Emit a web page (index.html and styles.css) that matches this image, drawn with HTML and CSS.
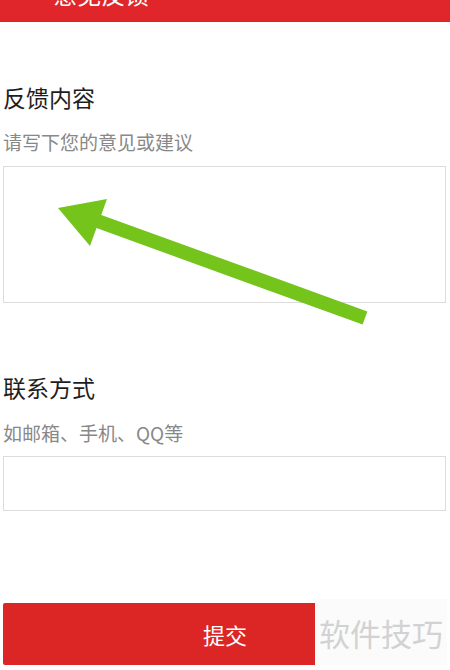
FILE: index.html
```html
<!DOCTYPE html>
<html lang="zh-CN">
<head>
    <meta charset="UTF-8">
    <meta name="viewport" content="width=device-width, initial-scale=1.0">
    <title>意见反馈</title>
    <link rel="stylesheet" href="styles.css">
</head>
<body>
    <div class="header">
        <span class="back">&lt;</span>
        <span class="header-title">意见反馈</span>
    </div>

    <div class="form">
        <div class="field">
            <div class="field-title">反馈内容</div>
            <div class="field-hint">请写下您的意见或建议</div>
            <textarea class="feedback-box"></textarea>
        </div>

        <div class="field contact">
            <div class="field-title">联系方式</div>
            <div class="field-hint">如邮箱、手机、QQ等</div>
            <input class="contact-box" type="text">
        </div>
    </div>

    <div class="footer">
        <button class="submit">提交</button>
        <div class="watermark">软件技巧</div>
    </div>

    <svg class="pointer" width="450" height="670" viewBox="0 0 450 670">
        <line x1="365" y1="318" x2="92" y2="219" stroke="#74c41c" stroke-width="14"/>
        <polygon points="58,208 107,199 90,246" fill="#74c41c"/>
    </svg>
</body>
</html>
```

FILE: styles.css
```css
* {
    margin: 0;
    padding: 0;
    box-sizing: border-box;
    font-family: 'Noto Sans CJK SC', 'Noto Sans', sans-serif;
}

body {
    background: #fff;
    width: 450px;
    height: 670px;
    overflow: hidden;
    position: relative;
}

.header {
    height: 22px;
    background: #e0262a;
    overflow: hidden;
    display: flex;
    align-items: flex-end;
    gap: 41px;
}

.back {
    color: #fff;
    font-size: 22px;
    line-height: 22px;
    margin-bottom: 18px;
}

.header-title {
    color: #fff;
    font-size: 24px;
    line-height: 22px;
    margin-bottom: 17px;
}

.form {
    padding: 0 4px 0 3px;
}

.field {
    display: flex;
    flex-direction: column;
}

.field-title {
    margin-top: 60px;
    font-size: 23px;
    line-height: 30px;
    color: #1e1e1e;
}

.field-hint {
    margin-top: 15px;
    font-size: 19px;
    line-height: 30px;
    color: #888;
}

.feedback-box {
    margin-top: 9px;
    height: 137px;
    border: 1px solid #dcdcdc;
    resize: none;
    outline: none;
}

.contact .field-title {
    margin-top: 69px;
}

.contact .field-hint {
    margin-top: 16px;
}

.contact-box {
    margin-top: 8px;
    height: 55px;
    border: 1px solid #dcdcdc;
    outline: none;
}

.footer {
    position: relative;
    margin-top: 92px;
    padding: 0 3px;
}

.submit {
    width: 100%;
    height: 62px;
    border: none;
    border-radius: 2px;
    background: #dc2626;
    color: #fff;
    font-size: 22px;
}

.watermark {
    position: absolute;
    top: -4px;
    right: 3px;
    width: 132px;
    height: 66px;
    background: #fbfbfb;
    color: #d2d2d2;
    font-size: 31px;
    display: flex;
    align-items: center;
    justify-content: center;
}

.pointer {
    position: absolute;
    left: 0;
    top: 0;
    pointer-events: none;
}
```
